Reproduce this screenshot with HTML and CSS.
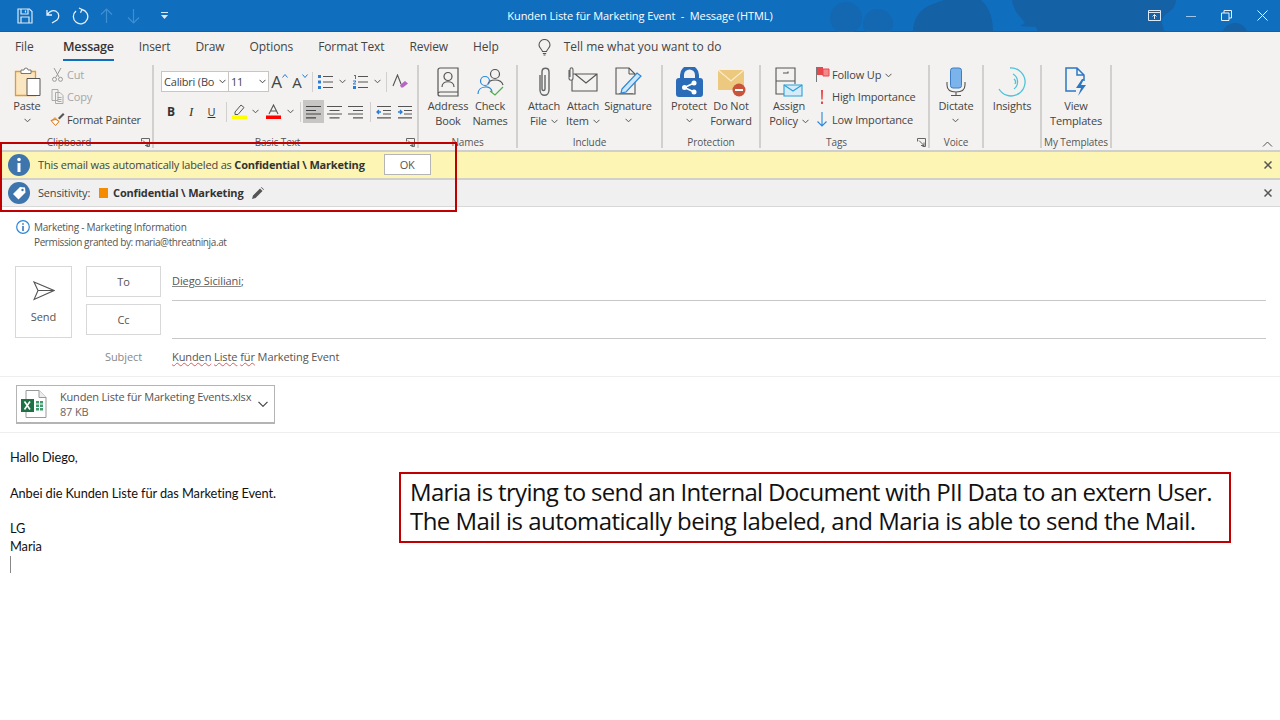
FILE: index.html
```html
<!DOCTYPE html>
<html lang="en">
<head>
<meta charset="utf-8">
<title>Kunden Liste für Marketing Event - Message (HTML)</title>
<link rel="stylesheet" href="styles.css">
</head>
<body>
<div class="app">
  <header class="titlebar">
    <svg class="title-art" width="1280" height="32" viewBox="0 0 1280 32"><g fill="#1468b2"><circle cx="846" cy="18" r="16"/><circle cx="878" cy="24" r="15"/></g><g fill="#1561a5"><path d="M913 32c0-14 8-24 20-28 6-2 10-4 12-4h36c10 8 12 22 12 32z"/><path d="M1012 0c1 8 5 14 10 19l3 4-5 3 16 1 2 5h127c-3-8-5-12 0-17 6-5 10-6 11-15z"/><circle cx="1235" cy="36" r="13"/></g></svg>
    <div class="qat">
      <svg width="18" height="18" viewBox="0 0 18 18" fill="none" stroke="#dbe9f6" stroke-width="1.2"><path d="M2 2h11.500L16 4.500V16H2zM5 2v5h7V2M5 16v-6h8v6M9.500 3.500v2"/></svg>
      <svg class="q-undo" width="16" height="16" viewBox="0 0 16 16" fill="none" stroke="#e8f1fa" stroke-width="1.3"><path d="M2 2v5h5M2.500 6.500C5 3 8 1.800 11 3.200c3.500 2 3.500 6.500 1 8.800L7 15"/></svg>
      <svg class="q-redo" width="18" height="18" viewBox="0 0 18 18" fill="none" stroke="#e8f1fa" stroke-width="1.3"><path d="M11 2.500A7.200 7.200 0 1 1 5 4M11 2.500l-3-1.500M11 2.500l-1.500 3.200"/></svg>
      <svg class="q-up" width="13" height="16" viewBox="0 0 13 16" fill="none" stroke="#3f8fd0" stroke-width="1.2"><path d="M6.500 15V1M1 6.500 6.500 1 12 6.500"/></svg>
      <svg class="q-down" width="13" height="16" viewBox="0 0 13 16" fill="none" stroke="#3f8fd0" stroke-width="1.2"><path d="M6.500 1v14M1 9.500 6.500 15 12 9.500"/></svg>
      <svg class="q-more" width="9" height="8" viewBox="0 0 9 8" fill="#dbe9f6"><path d="M1 0h7v1H1zM1 3h7L4.500 7z"/></svg>
    </div>
    <div class="title-text">Kunden Liste für Marketing Event &nbsp;-&nbsp; Message (HTML)</div>
    <div class="winbtns">
      <svg width="13" height="11" viewBox="0 0 13 11" fill="none" stroke="#dbe9f6"><path d="M.5.500h12v10H.500zM.5 2.500h12M6.500 9V4.500M4.500 6.500l2-2 2 2"/></svg>
      <svg width="10" height="10" viewBox="0 0 10 10" stroke="#9fc6e8"><path d="M0 5.500h10"/></svg>
      <svg width="11" height="11" viewBox="0 0 11 11" fill="none" stroke="#e8f1fa"><path d="M.5 3h7.500v7.500H.500zM3 3V.5h7.500V8H8"/></svg>
      <svg width="11" height="11" viewBox="0 0 11 11" fill="none" stroke="#f2f7fc"><path d="m.5.500 10 10M10.500.500l-10 10"/></svg>
    </div>
  </header>

  <nav class="tabs">
    <span class="tab tab-file">File</span>
    <span class="tab tab-active">Message</span>
    <span class="tab">Insert</span>
    <span class="tab">Draw</span>
    <span class="tab">Options</span>
    <span class="tab">Format Text</span>
    <span class="tab">Review</span>
    <span class="tab">Help</span>
    <svg class="bulb" width="13" height="17" viewBox="0 0 13 17" fill="none" stroke="#555" stroke-width="1.1"><path d="M4.500 12.500C4 10 1 9 1 6a5.500 5.500 0 0 1 11 0c0 3-3 4-3.500 6.500zM4.800 14.500h3.400M5.500 16h2"/></svg>
    <span class="tab tell">Tell me what you want to do</span>
  </nav>

  <section class="ribbon">
    <div class="group g-clip">
      <div class="group-body">
        <div class="big b-paste">
          <svg class="ico" width="28" height="30" viewBox="0 0 28 30" fill="none"><path d="M2.500 4.500h20v24h-20z" fill="#fbe6c2" stroke="#e59a2c" stroke-width="1.300"/><path d="M8 4.500V3h3a2 2 0 0 1 4 0h3v3.500H8z" fill="#fff" stroke="#777"/><path d="M14 11.500h13v17H14z" fill="#fff" stroke="#555"/></svg>
          <span class="t">Paste</span>
          <svg class="chev" width="7" height="5" viewBox="0 0 7 5"><path d="m.5.800 3 3 3-3" fill="none" stroke="#555"/></svg>
        </div>
        <div class="small-col clip-col">
          <div class="small dim"><svg width="12" height="15" viewBox="0 0 12 15" fill="none" stroke="#999"><path d="M2.500 1l5 9M9.500 1l-5 9"/><circle cx="3" cy="12.300" r="2"/><circle cx="9" cy="12.300" r="2"/></svg><span>Cut</span></div>
          <div class="small dim"><svg width="12" height="15" viewBox="0 0 12 15" fill="none" stroke="#aaa"><path d="M.5.500h6v11h-6zM4 3.500h4.500l3 3v8H4z" fill="#f3f2f1"/><path d="M6 8.500h4M6 10.500h4M6 12.500h4"/></svg><span>Copy</span></div>
          <div class="small"><svg width="15" height="15" viewBox="0 0 15 15"><path d="M1 8.500 6 13.500 9.500 9.500 5 5z" fill="#f2a33a"/><path d="M1 8.500l5-1 3 2-3.500 4z" fill="#fff" stroke="#d9792b"/><path d="m8 6 5-5 1.500 1.500-5 5z" fill="#555"/></svg><span>Format Painter</span></div>
        </div>
      </div>
      <div class="group-label lab-clip">Clipboard</div>
      <svg class="launcher" width="9" height="9" viewBox="0 0 9 9" fill="none" stroke="#666"><path d="M.5 3.500v-3h8v8h-3M2 2.500l5 5M4 7.500h3v-3"/></svg>
    </div>

    <div class="group g-text">
      <div class="group-body stack">
        <div class="tool-row r1">
          <div class="combo c-font"><span>Calibri (Bo</span><svg width="7" height="5" viewBox="0 0 7 5"><path d="m.5.800 3 3 3-3" fill="none" stroke="#444"/></svg></div>
          <div class="combo c-size"><span>11</span><svg width="7" height="5" viewBox="0 0 7 5"><path d="m.5.800 3 3 3-3" fill="none" stroke="#444"/></svg></div>
          <div class="tool w21 grow-a"><span class="fa fa-l">A</span><svg width="6" height="4" viewBox="0 0 6 4"><path d="m.5 3.500 2.500-3 2.500 3" fill="none" stroke="#2b7cd3"/></svg></div>
          <div class="tool w20 grow-a"><span class="fa fa-s">A</span><svg width="6" height="4" viewBox="0 0 6 4"><path d="m.5.500 2.500 3 2.500-3" fill="none" stroke="#2b7cd3"/></svg></div>
          <i class="sep"></i>
          <div class="tool w20"><svg width="15" height="14" viewBox="0 0 15 14"><path d="M0 0h3v3H0zM0 5.500h3v3H0zM0 11h3v3H0z" fill="#2b7cd3"/><path d="M5 1.500h10M5 7h10M5 12.500h10" stroke="#555" stroke-width="1.200"/></svg></div>
          <div class="tool w14"><svg width="7" height="5" viewBox="0 0 7 5"><path d="m.5.800 3 3 3-3" fill="none" stroke="#555"/></svg></div>
          <div class="tool w22"><svg width="15" height="14" viewBox="0 0 15 14"><path d="M1 0h2v4H2V1H1zM0 5.500h3v1.500l-2 1.500h2v1H0V8.500l2-1.500V6.500H0zM0 11h3v3H0z" fill="#2b7cd3"/><path d="M5 1.500h10M5 7h10M5 12.500h10" stroke="#555" stroke-width="1.200"/></svg></div>
          <div class="tool w13"><svg width="7" height="5" viewBox="0 0 7 5"><path d="m.5.800 3 3 3-3" fill="none" stroke="#555"/></svg></div>
          <i class="sep"></i>
          <div class="tool w21"><svg width="16" height="15" viewBox="0 0 16 15"><path d="M1 12 5.500 1 9 10" fill="none" stroke="#555" stroke-width="1.100"/><path d="m8 11 5-4 3 2.500-5 4H9z" fill="#b565c4"/></svg></div>
        </div>
        <div class="tool-row r2">
          <div class="tool w20 fmt bold">B</div>
          <div class="tool w20 fmt ital">I</div>
          <div class="tool w21 fmt und">U</div>
          <i class="sep s2"></i>
          <div class="tool w20"><svg width="15" height="15" viewBox="0 0 15 15"><path d="m3 8 6-7 3 2.500-6 7H3z" fill="none" stroke="#555"/><path d="M0 11.500h15V15H0z" fill="#ffff00"/></svg></div>
          <div class="tool w12"><svg width="7" height="5" viewBox="0 0 7 5"><path d="m.5.800 3 3 3-3" fill="none" stroke="#555"/></svg></div>
          <div class="tool w21 s-l"><svg width="15" height="15" viewBox="0 0 15 15"><path d="m3 10 4.500-9L12 10M4.500 7h6" fill="none" stroke="#555" stroke-width="1.100"/><path d="M0 11.500h15V15H0z" fill="#ff0000"/></svg></div>
          <div class="tool w12"><svg width="7" height="5" viewBox="0 0 7 5"><path d="m.5.800 3 3 3-3" fill="none" stroke="#555"/></svg></div>
          <i class="sep s2"></i>
          <div class="tool w21 selected"><svg width="15" height="14" viewBox="0 0 15 14" stroke="#444" stroke-width="1.200"><path d="M0 1.500h15M0 5.500h10M0 9h15M0 12.800h10"/></svg></div>
          <div class="tool w21"><svg width="15" height="14" viewBox="0 0 15 14" stroke="#555" stroke-width="1.200"><path d="M0 1.500h15M2.500 5.500h10M0 9h15M2.500 12.800h10"/></svg></div>
          <div class="tool w21"><svg width="15" height="14" viewBox="0 0 15 14" stroke="#555" stroke-width="1.200"><path d="M0 1.500h15M5 5.500h10M0 9h15M5 12.800h10"/></svg></div>
          <i class="sep s2"></i>
          <div class="tool w20"><svg width="15" height="14" viewBox="0 0 15 14"><path d="M1 1.500h14M7 5.500h8M7 9h8M1 12.800h14" stroke="#555" stroke-width="1.200"/><path d="M5 7H1m2-2L1 7l2 2" fill="none" stroke="#2b7cd3" stroke-width="1.300"/></svg></div>
          <div class="tool w22"><svg width="15" height="14" viewBox="0 0 15 14"><path d="M1 1.500h14M7 5.500h8M7 9h8M1 12.800h14" stroke="#555" stroke-width="1.200"/><path d="M1 7h4M3 5l2 2-2 2" fill="none" stroke="#2b7cd3" stroke-width="1.300"/></svg></div>
        </div>
      </div>
      <div class="group-label lab-text">Basic Text</div>
      <svg class="launcher" width="9" height="9" viewBox="0 0 9 9" fill="none" stroke="#666"><path d="M.5 3.500v-3h8v8h-3M2 2.500l5 5M4 7.500h3v-3"/></svg>
    </div>

    <div class="group g-names">
      <div class="group-body">
        <div class="big w42">
          <svg class="ico" width="22" height="30" viewBox="0 0 22 30" fill="none" stroke="#555" stroke-width="1.200"><path d="M3 1h18v24H3a2 2 0 0 0-2 2 2 2 0 0 0 2 2h18v-4M1 27V3a2 2 0 0 1 2-2"/><circle cx="11" cy="9.500" r="4"/><path d="M5 20c0-7 12-7 12 0"/></svg>
          <span class="t">Address<br>Book</span>
        </div>
        <div class="big w42">
          <svg class="ico" width="28" height="30" viewBox="0 0 28 30" fill="none" stroke-width="1.200"><circle cx="19" cy="7" r="4.500" stroke="#555"/><path d="M12 17c1-5 13-6 15 1" stroke="#555"/><circle cx="9" cy="14" r="4.500" stroke="#2b88d8"/><path d="M2 27c0-9 14-9 14-2" stroke="#2b88d8"/><path d="m14 24 5 4 8-8" stroke="#4caf50"/></svg>
          <span class="t">Check<br>Names</span>
        </div>
      </div>
      <div class="group-label">Names</div>
    </div>

    <div class="group g-incl">
      <div class="group-body">
        <div class="big w38">
          <svg class="ico" width="14" height="30" viewBox="0 0 14 30" fill="none" stroke="#666" stroke-width="1.400"><path d="M3 8v15c0 7 9 7 9 0V5c0-5-7-5-7 0v17c0 2 3 2 3 0V8"/></svg>
          <span class="t">Attach<br>File<svg class="chev-i" width="7" height="5" viewBox="0 0 7 5"><path d="m.5.800 3 3 3-3" fill="none" stroke="#555"/></svg></span>
        </div>
        <div class="big w40">
          <svg class="ico" width="30" height="30" viewBox="0 0 30 30" fill="none" stroke="#555" stroke-width="1.100"><path d="M4 7h25v17H4zM7 7l11 9 11-9"/><path d="M1 3v8c0 3 4 3 4 0V3c0-3-3-3-3 0v7" stroke="#666" fill="#f3f2f1"/></svg>
          <span class="t">Attach<br>Item<svg class="chev-i" width="7" height="5" viewBox="0 0 7 5"><path d="m.5.800 3 3 3-3" fill="none" stroke="#555"/></svg></span>
        </div>
        <div class="big w50">
          <svg class="ico" width="27" height="30" viewBox="0 0 27 30" fill="none"><path d="M1 1h13l6 6v20H1z" stroke="#555" stroke-width="1.100"/><path d="M14 1v6h6" stroke="#555"/><path d="m7 22 15-16 4 3-15 16-5 1z" fill="#cfe6f8" stroke="#2b88d8" stroke-width="1.200"/><path d="M4 26.500h14" stroke="#2b88d8"/></svg>
          <span class="t">Signature</span>
          <svg class="chev" width="7" height="5" viewBox="0 0 7 5"><path d="m.5.800 3 3 3-3" fill="none" stroke="#555"/></svg>
        </div>
      </div>
      <div class="group-label">Include</div>
    </div>

    <div class="group g-prot">
      <div class="group-body">
        <div class="big w42">
          <svg class="ico" width="27" height="30" viewBox="0 0 27 30"><path d="M6 13V8a7.500 7.500 0 0 1 15 0v5" fill="none" stroke="#2b6cb8" stroke-width="4"/><rect y="11" width="27" height="19" rx="3" fill="#2b6cb8"/><circle cx="8.500" cy="20.500" r="2.500" fill="#fff"/><circle cx="18" cy="16" r="2.500" fill="#fff"/><circle cx="18" cy="25" r="2.500" fill="#fff"/><path d="m8.500 20.500 9.500-4.500M8.500 20.500l9.500 4.500" stroke="#fff" stroke-width="1.500"/></svg>
          <span class="t">Protect</span>
          <svg class="chev" width="7" height="5" viewBox="0 0 7 5"><path d="m.5.800 3 3 3-3" fill="none" stroke="#555"/></svg>
        </div>
        <div class="big w42">
          <svg class="ico" width="29" height="30" viewBox="0 0 29 30"><path d="M1 3h26v20H1z" fill="#ecc97e"/><path d="m1 3 13 11L27 3" fill="none" stroke="#fbeccb" stroke-width="1.200"/><circle cx="22" cy="23" r="6.500" fill="#c9543b"/><path d="M18 23h8" stroke="#fff" stroke-width="2"/></svg>
          <span class="t">Do Not<br>Forward</span>
        </div>
      </div>
      <div class="group-label">Protection</div>
    </div>

    <div class="group g-tags">
      <div class="group-body">
        <div class="big w46">
          <svg class="ico" width="28" height="30" viewBox="0 0 28 30" fill="none" stroke="#555" stroke-width="1.100"><path d="M1 1h19v13H1zM1 14v13h10M20 14v3M8 6h5v-1.500"/><path d="M9 18h18v11H9z" fill="#d4ecfa" stroke="#2b9fd8"/><path d="m9 18 9 6 9-6" stroke="#2b9fd8"/></svg>
          <span class="t">Assign<br>Policy<svg class="chev-i" width="7" height="5" viewBox="0 0 7 5"><path d="m.5.800 3 3 3-3" fill="none" stroke="#555"/></svg></span>
        </div>
        <div class="small-col tag-col">
          <div class="small"><svg width="16" height="16" viewBox="0 0 16 16"><path d="M1.500 1v15" stroke="#777"/><path d="M2 1h6v8H2z" fill="#e8474c"/><path d="M8 3h6v7H8z" fill="#f28a8c" stroke="#e8474c"/></svg><span>Follow Up<svg class="chev-i" width="7" height="5" viewBox="0 0 7 5"><path d="m.5.800 3 3 3-3" fill="none" stroke="#555"/></svg></span></div>
          <div class="small"><svg width="16" height="16" viewBox="0 0 16 16"><path d="M6 1h2l-.3 9.500H6.300zM6 12.500h2v2.500H6z" fill="#e8474c"/></svg><span>High Importance</span></div>
          <div class="small"><svg width="16" height="16" viewBox="0 0 16 16" fill="none" stroke="#2b88d8" stroke-width="1.100"><path d="M7 1v14M2.500 10.500 7 15l4.500-4.500"/></svg><span>Low Importance</span></div>
        </div>
      </div>
      <div class="group-label lab-tags">Tags</div>
      <svg class="launcher" width="9" height="9" viewBox="0 0 9 9" fill="none" stroke="#666"><path d="M.5 3.500v-3h8v8h-3M2 2.500l5 5M4 7.500h3v-3"/></svg>
    </div>

    <div class="group g-voice">
      <div class="group-body center">
        <div class="big">
          <svg class="ico" width="20" height="30" viewBox="0 0 20 30" fill="none"><rect x="4.500" y="1" width="11" height="20" rx="2.500" fill="#7ab4ea" stroke="#3d7fc4"/><path d="M1 15v3c0 5 4 7 9 7s9-2 9-7v-3M10 25v3M5 28.500h10" stroke="#555" stroke-width="1.100"/></svg>
          <span class="t">Dictate</span>
          <svg class="chev" width="7" height="5" viewBox="0 0 7 5"><path d="m.5.800 3 3 3-3" fill="none" stroke="#555"/></svg>
        </div>
      </div>
      <div class="group-label">Voice</div>
    </div>

    <div class="group g-ins">
      <div class="group-body center">
        <div class="big">
          <svg class="ico" width="30" height="30" viewBox="0 0 30 30" fill="none" stroke="#4dc3d8" stroke-width="1.300"><path d="M13 1a14 14 0 1 1-11 21"/><path d="M16 7a9 9 0 0 1 1 15"/><path d="M17 12a4 4 0 0 1 1 5"/></svg>
          <span class="t">Insights</span>
        </div>
      </div>
    </div>

    <div class="group g-tpl">
      <div class="group-body center">
        <div class="big">
          <svg class="ico" width="24" height="30" viewBox="0 0 24 30" fill="none"><path d="M12 24H2V1h11l7 7v6M13 1v7h7" stroke="#2b78c4" stroke-width="1.500"/><path d="m18 12-6 9h5l-3 8 8-11h-5l3-6z" fill="#2b78c4"/></svg>
          <span class="t">View<br>Templates</span>
        </div>
      </div>
      <div class="group-label">My Templates</div>
    </div>
    <svg class="collapse" width="11" height="6" viewBox="0 0 11 6" fill="none" stroke="#555"><path d="m1 5.500 4.500-4.500L10 5.500"/></svg>
  </section>

  <div class="bar bar-yellow">
    <svg class="bar-ico" width="22" height="22" viewBox="0 0 22 22"><circle cx="11" cy="11" r="11" fill="#3e75ad"/><circle cx="11" cy="5.500" r="1.800" fill="#fff"/><path d="M9.500 9h3v9h-3z" fill="#fff"/></svg>
    <span class="bar-text">This email was automatically labeled as <b>Confidential \ Marketing</b></span>
    <span class="ok">OK</span>
    <svg class="bar-x" width="8" height="8" viewBox="0 0 8 8" stroke="#555" stroke-width="1.500"><path d="m.5.500 7 7M7.500.500l-7 7"/></svg>
  </div>
  <div class="bar bar-gray">
    <svg class="bar-ico" width="22" height="22" viewBox="0 0 22 22"><circle cx="11" cy="11" r="11" fill="#3e75ad"/><path d="M5 12 12 5l5 .5.500 5-7 7z" fill="#fff"/><circle cx="14.500" cy="8" r="1.200" fill="#3e75ad"/></svg>
    <span class="bar-text sens-label">Sensitivity:</span>
    <i class="swatch"></i>
    <b class="bar-text sens-value">Confidential \ Marketing</b>
    <svg class="pencil" width="12" height="12" viewBox="0 0 12 12"><path d="M0 12l1-3.500 7-7L10.500 4l-7 7zM9 .5 9.500 0 12 2.500 11.500 3z" fill="#555"/></svg>
    <svg class="bar-x" width="8" height="8" viewBox="0 0 8 8" stroke="#555" stroke-width="1.500"><path d="m.5.500 7 7M7.500.500l-7 7"/></svg>
  </div>

  <main class="compose">
    <div class="perm">
      <svg width="14" height="14" viewBox="0 0 14 14" fill="none"><circle cx="7" cy="7" r="6.300" stroke="#2b88d8" stroke-width="1.200"/><path d="M7 3.200v1.600M7 6v5" stroke="#2b6cb8" stroke-width="1.500"/></svg>
      <div class="perm-text"><div>Marketing - Marketing Information</div><div class="perm-by">Permission granted by: maria@threatninja.at</div></div>
    </div>

    <div class="head">
      <div class="send">
        <svg width="22" height="20" viewBox="0 0 22 20" fill="none" stroke="#555" stroke-width="1.100"><path d="M1 1 21 9.500 1 18.500 5 9.500zM5 9.500h16"/></svg>
        <span>Send</span>
      </div>
      <div class="fields">
        <div class="row"><div class="addr">To</div><div class="val line"><span class="grammar">Diego Siciliani</span>;</div></div>
        <div class="row"><div class="addr">Cc</div><div class="val line"></div></div>
        <div class="row subj"><div class="addr-label">Subject</div><div class="val"><span class="spell">Kunden</span> <span class="spell">Liste</span> <span class="spell">für</span> Marketing Event</div></div>
      </div>
    </div>

    <div class="attach-row">
      <div class="attach">
        <svg width="26" height="28" viewBox="0 0 26 28"><path d="M5 .5h13l7 7v20H5z" fill="#fff" stroke="#999"/><path d="M18 .5v7h7" fill="#eee" stroke="#999"/><rect y="9" width="13" height="13" fill="#1e7145"/><path d="M3.500 11.500l5.500 8M9 11.500l-5.500 8" stroke="#fff" stroke-width="1.600"/><path d="M15 11h3v2.500h-3zM19 11h3v2.500h-3zM15 14.500h3V17h-3zM19 14.500h3V17h-3zM15 18h3v2.500h-3zM19 18h3v2.500h-3z" fill="#3d9a6a"/></svg>
        <div class="att-text"><span>Kunden Liste für Marketing Events.xlsx</span><span class="att-size">87 KB</span></div>
        <svg class="att-chev" width="10" height="6" viewBox="0 0 10 6"><path d="m.5.800 4.500 4.500L9.500.8" fill="none" stroke="#444" stroke-width="1.200"/></svg>
      </div>
    </div>

    <div class="mail">
      <p>Hallo Diego,</p>
      <p>&nbsp;</p>
      <p>Anbei die Kunden Liste für das Marketing Event.</p>
      <p>&nbsp;</p>
      <p>LG</p>
      <p>Maria</p>
      <i class="caret"></i>
    </div>
  </main>

  <div class="hl-box"></div>
  <div class="note"><span class="note-line n1">Maria is trying to send an Internal Document with PII Data to an extern User.</span><span class="note-line n2">The Mail is automatically being labeled, and Maria is able to send the Mail.</span></div>
</div>
</body>
</html>
```

FILE: styles.css
```css
* { box-sizing: border-box; }
html, body { margin: 0; padding: 0; background: #fff; }
.app { position: relative; width: 1280px; height: 720px; overflow: hidden; font-family: "Open Sans", "Liberation Sans", sans-serif; color: #444; }
svg { display: block; flex: none; }

/* Title bar */
.titlebar { position: relative; height: 32px; background: #106ebe; display: grid; grid-template-columns: 1fr auto 1fr; align-items: center; color: #fff; border-bottom: 1px solid #0e62aa; }
.title-art { position: absolute; left: 0; top: 0; }
.qat { position: relative; display: flex; align-items: center; padding-left: 16px; }
.q-undo { margin-left: 11px; }
.q-redo { margin-left: 10px; }
.q-up { margin-left: 11px; }
.q-down { margin-left: 14px; }
.q-more { margin-left: 20px; }
.title-text { position: relative; font-size: 11px; letter-spacing: -.08px; }
.winbtns { position: relative; display: flex; align-items: center; justify-content: flex-end; gap: 25px; padding-right: 12px; }

/* Tabs */
.tabs { height: 30px; background: #f3f2f1; display: flex; align-items: center; gap: 25px; padding-left: 15px; font-size: 12px; }
.tab { line-height: 26px; height: 26px; position: relative; letter-spacing: -.1px; white-space: nowrap; }
.tab-file { margin-right: 4.500px; }
.tab-active { font-weight: 600; color: #333; font-size: 12.500px; letter-spacing: -.25px; }
.tab-active::after { content: ""; position: absolute; left: 0; right: 0; bottom: -1px; height: 2px; background: #106ebe; }
.bulb { margin-left: 14px; }
.tell { margin-left: -12px; letter-spacing: 0; }

/* Ribbon */
.ribbon { position: relative; height: 90px; padding-top: 3px; background: #f3f2f1; display: flex; align-items: flex-start; border-bottom: 2px solid #cfcfcf; font-size: 11px; line-height: 15px; letter-spacing: -.15px; }
.group { position: relative; height: 83px; border-right: 2px solid #d2d0ce; display: flex; flex-direction: column; flex: none; }
.group-body { flex: 1; display: flex; padding-top: 1px; min-height: 0; }
.group-body.center { justify-content: center; }
.group-body.stack { flex-direction: column; }
.group-label { height: 12px; line-height: 12px; font-size: 10px; text-align: center; color: #555; letter-spacing: -.1px; white-space: nowrap; }
.lab-clip { padding-right: 14px; }
.lab-text { padding-right: 16px; }
.lab-tags { padding-right: 16px; }
.launcher { position: absolute; right: 2px; bottom: 1px; }
.g-clip { width: 154px; }
.g-text { width: 265px; }
.g-names { width: 99px; }
.g-names .group-body { padding-left: 8px; }
.g-incl { width: 145px; }
.g-incl .group-body { padding-left: 7px; }
.g-prot { width: 98px; }
.g-prot .group-body { padding-left: 5px; }
.g-tags { width: 169px; }
.g-tags .group-body { padding-left: 5px; }
.g-voice { width: 54px; }
.g-ins { width: 58px; }
.g-tpl { width: 70px; }

.big { display: flex; flex-direction: column; align-items: center; text-align: center; flex: none; }
.ico { height: 32px; padding: 1px 0; width: auto; }
.t { display: block; white-space: nowrap; }
.chev { margin-top: 5px; }
.chev-i { display: inline-block; margin-left: 4px; vertical-align: 1px; }
.w38 { width: 38px; } .w40 { width: 40px; } .w42 { width: 42px; } .w46 { width: 46px; } .w50 { width: 50px; }
.b-paste { width: 28px; margin-left: 13px; }

.small-col { display: flex; flex-direction: column; margin-top: -3px; }
.small { display: flex; align-items: center; height: 22.500px; white-space: nowrap; }
.small.dim { color: #a6a6a6; }
.clip-col { margin-left: 9px; letter-spacing: -.2px; }
.clip-col .small svg { width: 15px; margin-right: 2px; }
.tag-col { margin-left: 3px; }
.tag-col .small svg { width: 16px; margin-right: 1px; }
.tag-col .small .chev-i { width: 7px; margin-right: 0; }

/* Basic text tools */
.tool-row { display: flex; align-items: center; padding-left: 7px; }
.r1 { margin-top: 5px; height: 21px; }
.r2 { margin-top: 8px; height: 23px; }
.combo { height: 21px; background: #fff; border: 1px solid #c8c6c4; display: flex; align-items: center; justify-content: space-between; padding: 0 2px 0 2px; font-size: 11px; letter-spacing: -.2px; }
.c-font { width: 68px; }
.c-size { width: 41px; margin-left: -1px; }
.tool { display: flex; align-items: center; justify-content: center; height: 22px; flex: none; }
.w12 { width: 12px; } .w13 { width: 13px; } .w14 { width: 14px; } .w20 { width: 20px; } .w21 { width: 21px; } .w22 { width: 22px; }
.grow-a { align-items: flex-start; }
.grow-a svg { margin-top: 3px; }
.fa { font-size: 17px; line-height: 22px; }
.fa-s { font-size: 15px; }
.sep { display: block; width: 1px; height: 20px; margin: 0 2px; background: #d2d0ce; flex: none; }
.s2 { margin: 0 2px 0 4px; }
.s-l { margin-left: 2px; }
.selected { height: 23px; background: #c8c6c4; }
.fmt { font-family: "Liberation Serif", serif; font-size: 13px; color: #333; }
.bold { font-family: "Open Sans", sans-serif; font-weight: 700; font-size: 12px; }
.ital { font-style: italic; }
.und { text-decoration: underline; font-family: "Open Sans", sans-serif; font-size: 11px; }

.collapse { position: absolute; right: 7px; bottom: 3px; }

/* Notification bars */
.bar { display: flex; align-items: center; font-size: 11px; position: relative; padding-left: 8px; padding-right: 8px; letter-spacing: -.18px; }
.bar-yellow { height: 28px; background: #fcf5b3; border-bottom: 2px solid #d2d0c8; }
.bar-gray { height: 27px; background: #f0f0f0; border-bottom: 1px solid #d8d8d8; }
.bar-ico { margin-right: 8px; }
.bar-text { color: #444; white-space: nowrap; margin-top: -2px; }
.bar-text b, .sens-value { color: #333; font-weight: 700; }
.ok { margin-left: 19px; width: 47px; height: 21px; line-height: 19px; text-align: center; background: #fff; border: 1px solid #b5b5b5; color: #555; margin-top: -1px; }
.bar-x { margin-left: auto; }
.swatch { display: block; width: 9px; height: 10px; background: #f58b00; margin-left: 9px; margin-right: 5px; }
.pencil { margin-left: 9px; }

/* Compose */
.compose { font-size: 11px; letter-spacing: -.1px; }
.perm { display: flex; padding: 12px 0 0 16px; height: 59px; }
.perm svg { margin-right: 4px; margin-top: 1px; }
.perm-text { line-height: 15px; font-size: 10px; color: #555; margin-top: 1px; letter-spacing: -.25px; white-space: nowrap; }
.perm-by { letter-spacing: -.38px; }
.head { display: flex; padding-left: 15px; }
.send { width: 57px; height: 72px; border: 1px solid #d8d8d8; display: flex; flex-direction: column; align-items: center; padding-top: 14px; gap: 8px; color: #555; }
.fields { flex: 1; margin-left: 14px; padding-right: 14px; }
.row { display: flex; height: 38px; }
.addr { width: 75px; height: 31px; border: 1px solid #d8d8d8; text-align: center; line-height: 29px; color: #555; flex: none; }
.addr-label { width: 75px; text-align: center; color: #888; flex: none; line-height: 30px; }
.val { flex: 1; margin-left: 11px; color: #555; }
.line { border-bottom: 1px solid #c8c8c8; height: 35px; line-height: 29px; }
.subj .val { line-height: 30px; }
.grammar { text-decoration: underline; text-decoration-color: #8a8a8a; }
.spell { text-decoration: underline wavy #e05a5a 1px; }
.subj { height: 33px; }
.attach-row { border-top: 1px solid #eee; border-bottom: 1px solid #eee; height: 57px; padding: 8px 0 0 16px; margin-top: 1px; }
.attach { width: 259px; height: 39px; border: 1px solid #b4b4b4; border-bottom-width: 2px; display: flex; align-items: center; padding-left: 4px; }
.att-text { display: flex; flex-direction: column; line-height: 15px; margin-left: 13px; color: #555; white-space: nowrap; letter-spacing: -.18px; }
.att-size { color: #666; }
.att-chev { margin-left: auto; margin-right: 6px; }
.mail { padding: 16px 0 0 10px; font-family: "Lato", "Liberation Sans", sans-serif; font-size: 12.800px; line-height: 17.800px; color: #111; letter-spacing: -.08px; }
.mail p { margin: 0; }
.caret { display: block; width: 1px; height: 17px; background: #888; }

/* Overlays */
.hl-box { position: absolute; left: 0; top: 142px; width: 457px; height: 70px; border: 2px solid #c00000; }
.note { position: absolute; left: 399px; top: 472px; width: 832px; height: 71px; border: 2px solid #c00000; background: #fff; padding: 4px 0 0 9px; font-size: 24px; line-height: 28.500px; color: #111; white-space: nowrap; }
.note-line { display: block; height: 28.500px; }
.n1 { letter-spacing: -.67px; }
.n2 { letter-spacing: -.54px; }
```
